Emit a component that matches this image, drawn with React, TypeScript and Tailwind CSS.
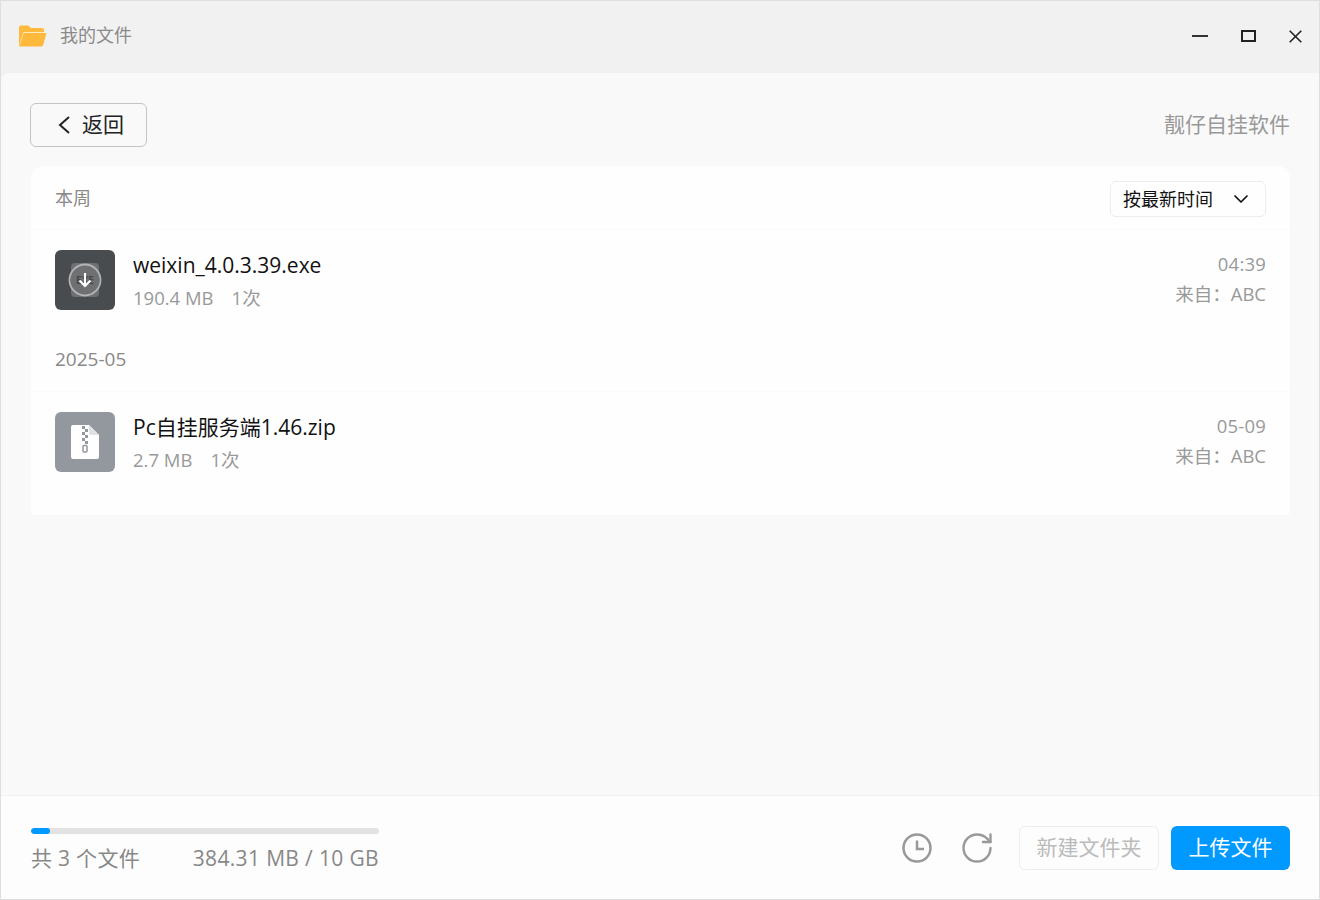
import { ChevronDown, RotateCw } from "lucide-react"

const fontStack = "font-['Open_Sans','Noto_Sans_CJK_SC',sans-serif]"

function FolderIcon() {
  return (
    <svg width="28" height="22" viewBox="0 0 28 22">
      <path d="M0 2.500C0 1.400.9.500 2 .500h6.500c.8 0 1.400.3 1.900.9L11.800 3H23c1.100 0 2 .9 2 2v2H5.500L1.500 19 0 20.500z" fill="#ffb93c" />
      <path d="M4.500 8h23l-3.300 12c-.2.900-1 1.500-1.900 1.500H0z" fill="#ffb93c" />
      <path d="M4 7.200h20.500v.8H4.600L1 20l-.4-.6z" fill="#ffe6b0" />
    </svg>
  )
}

function ExeIcon() {
  return (
    <div className="relative flex h-[60px] w-[60px] shrink-0 items-center justify-center rounded-md bg-[#494c4f]">
      <div className="absolute left-4 top-[13px] flex h-[34px] w-7 items-center justify-center rounded-sm bg-[#6e7072] text-[10px] font-bold text-[#45474a]">
        EXE
      </div>
      <svg className="relative" width="34" height="34" viewBox="0 0 34 34" fill="none">
        <circle cx="17" cy="17" r="15.500" stroke="#b4b5b6" strokeWidth="1.800" />
        <path d="M17 10v13M11.500 17.500 17 23l5.500-5.500" stroke="#fff" strokeWidth="2.200" />
      </svg>
    </div>
  )
}

function ZipIcon() {
  return (
    <div className="flex h-[60px] w-[60px] shrink-0 items-center justify-center rounded-md bg-[#92989e]">
      <svg width="28" height="34" viewBox="0 0 28 34">
        <path d="M2 0h16l10 10v22a2 2 0 0 1-2 2H2a2 2 0 0 1-2-2V2a2 2 0 0 1 2-2z" fill="#fff" />
        <path d="M18 0l10 10h-8a2 2 0 0 1-2-2z" fill="#dfe1e3" />
        <path d="M11 1h3v3h-3zM14 4h3v3h-3zM11 7h3v3h-3zM14 10h3v3h-3zM11 13h3v3h-3zM14 16h3v3h-3z" fill="#92989e" />
        <rect x="12" y="20.500" width="4" height="6.500" rx="1" fill="none" stroke="#92989e" strokeWidth="1.500" />
      </svg>
    </div>
  )
}

function FileRow({ icon, name, size, time }: { icon: React.ReactNode; name: string; size: string; time: string }) {
  return (
    <div className="flex h-[100px] items-center justify-between px-6">
      <div className="flex items-center gap-[18px]">
        {icon}
        <div className="pt-[3px]">
          <div className="text-[21px] leading-[30px] text-[#111]">{name}</div>
          <div className="mt-[3px] flex gap-[18px] text-[18.500px] leading-[30px] text-[#999]">
            <span>{size}</span>
            <span>1次</span>
          </div>
        </div>
      </div>
      <div className="pb-[2px] text-right text-[18.500px] leading-[30px] text-[#999]">
        <div className="tracking-[0.2px]">{time}</div>
        <div>来自：ABC</div>
      </div>
    </div>
  )
}

export default function App() {
  return (
    <div className={`flex h-[900px] w-[1320px] flex-col overflow-hidden border border-[#dedede] bg-[#f1f1f1] ${fontStack}`}>
      <header className="flex h-[72px] shrink-0 items-center justify-between pb-[2px] pl-[18px] pr-[17px]">
        <div className="flex items-center gap-[13px]">
          <FolderIcon />
          <span className="-mt-[2px] text-[18px] text-[#8a8a8a]">我的文件</span>
        </div>
        <div className="flex items-center gap-[33px]">
          <div className="h-[2px] w-4 bg-[#333]" />
          <div className="h-3 w-[15px] border-2 border-[#222]" />
          <svg width="13" height="13" viewBox="0 0 13 13" stroke="#222" strokeWidth="1.600">
            <path d="M.7.7l11.600 11.600M12.300.7.700 12.300" />
          </svg>
        </div>
      </header>

      <main className="flex min-h-0 flex-1 flex-col rounded-tl-lg bg-[#f9f9f9]">
        <div className="flex-1 pl-[30px] pr-[29px] pt-[30px]">
          <div className="flex items-center justify-between">
            <button className="-ml-px flex h-11 w-[117px] items-center gap-3 rounded-md border border-[#c4c4c4] pl-[27px] text-[21px] text-[#222]">
              <svg width="12" height="18" viewBox="0 0 12 18" fill="none" stroke="#222" strokeWidth="2">
                <path d="M11 1 2 9l9 8" />
              </svg>
              返回
            </button>
            <span className="text-[21px] text-[#999]">靓仔自挂软件</span>
          </div>

          <section className="mt-[19px] h-[349px] rounded-t-xl rounded-b-sm bg-[#fefefe]">
            <div className="flex h-16 items-center justify-between border-b border-[#fafafa] px-6 pt-[2px]">
              <span className="text-[18px] text-[#888]">本周</span>
              <button className="flex h-9 w-[156px] items-center justify-between rounded-md border border-[#ececec] pl-3 pr-3 pt-px text-[18px] text-[#111]">
                按最新时间
                <ChevronDown size={24} strokeWidth={1.700} />
              </button>
            </div>
            <FileRow icon={<ExeIcon />} name="weixin_4.0.3.39.exe" size="190.4 MB" time="04:39" />
            <div className="flex h-[62px] items-center border-b border-[#fafafa] px-6 pb-[2px] text-[19px] text-[#888]">2025-05</div>
            <FileRow icon={<ZipIcon />} name="Pc自挂服务端1.46.zip" size="2.7 MB" time="05-09" />
          </section>
        </div>

        <footer className="flex h-[104px] shrink-0 items-start justify-between border-t border-[#f1f1f1] bg-[#fdfdfd] pl-[30px] pr-[29px] pt-[30px]">
          <div className="w-[348px]">
            <div className="mt-[2px] h-[6px] overflow-hidden rounded-full bg-[#e2e2e2]">
              <div className="h-full w-[19px] rounded-full bg-[#0099ff]" />
            </div>
            <div className="mt-2 flex justify-between text-[21px] leading-[32px] text-[#888]">
              <span className="tracking-[0.3px]">共 3 个文件</span>
              <span className="tracking-[0.35px]">384.31 MB / 10 GB</span>
            </div>
          </div>
          <div className="flex items-center">
            <svg className="mr-[27px]" width="30" height="30" viewBox="0 0 30 30" fill="none" stroke="#999" strokeWidth="2.500">
              <circle cx="15" cy="15" r="13.500" />
              <path d="M15 7.500V16h7" />
            </svg>
            <RotateCw className="mr-6" size={36} strokeWidth={1.600} color="#999" />
            <button className="h-11 w-[140px] rounded-md border border-[#eeeeee] text-[21px] text-[#bbb]">新建文件夹</button>
            <button className="ml-3 h-11 w-[119px] rounded-md bg-[#0099ff] text-[21px] text-white">上传文件</button>
          </div>
        </footer>
      </main>
    </div>
  )
}
